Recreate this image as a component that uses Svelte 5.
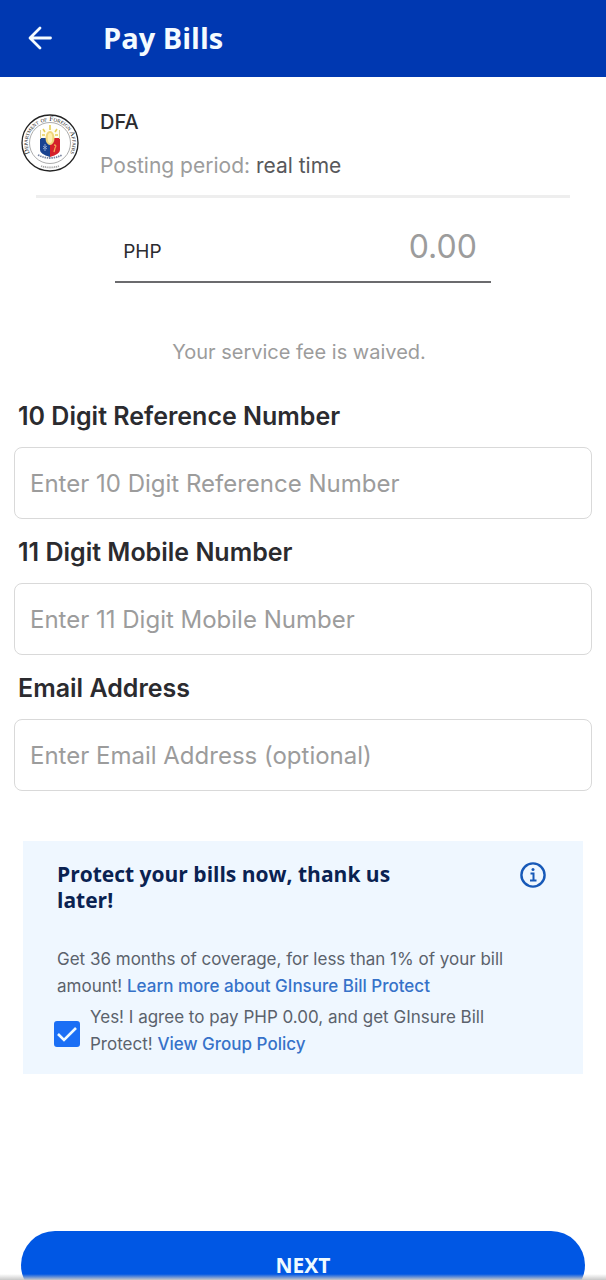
<script>
  let amount = $state('');
  let agreed = $state(true);

  const fields = [
    { id: 'reference', label: '10 Digit Reference Number', placeholder: 'Enter 10 Digit Reference Number', type: 'text' },
    { id: 'mobile', label: '11 Digit Mobile Number', placeholder: 'Enter 11 Digit Mobile Number', type: 'tel' },
    { id: 'email', label: 'Email Address', placeholder: 'Enter Email Address (optional)', type: 'email' }
  ];
</script>

<div class="screen">
  <header>
    <button class="icon-button" type="button" aria-label="Back">
      <svg width="24" height="24" viewBox="0 0 24 24" fill="none" stroke="currentColor" stroke-width="2.8" stroke-linecap="round" stroke-linejoin="round">
        <path d="M22.500 12H2.500M12 2 2 12l10 10" />
      </svg>
    </button>
    <h1>Pay Bills</h1>
  </header>

  <main>
    <section class="biller">
      <svg class="seal" width="60" height="60" viewBox="0 0 60 60" aria-hidden="true">
        <defs>
          <path id="seal-top" d="M15.500 47.500A22.400 22.400 0 1 1 44.500 47.500" />
          <clipPath id="shield"><path d="M20 17q5 1 10-3q5 4 10 3v20q0 4-10 7q-10-3-10-7z" /></clipPath>
        </defs>
        <circle cx="30" cy="30" r="28" fill="#fff" stroke="#222" stroke-width="1.3" />
        <circle cx="30" cy="30" r="20.500" fill="none" stroke="#888" stroke-width="0.7" />
        <text class="seal-text"><textPath href="#seal-top" startOffset="50%" text-anchor="middle">Department of Foreign Affairs</textPath></text>
        <path d="M21 53q9 3 18 0" fill="none" stroke="#aaa" stroke-width="1.8" stroke-dasharray="1.2 .7" />
        <g clip-path="url(#shield)">
          <path d="M20 12h20v14H20z" fill="#fffdf0" />
          <path d="M20 25h10v20H20z" fill="#194391" />
          <path d="M30 25h10v20H30z" fill="#d51f2a" />
        </g>
        <path d="M20.500 17v9M39.500 17v9" stroke="#ddd39a" />
        <ellipse cx="30" cy="25" rx="4.500" ry="7" fill="#f0d67a" />
        <ellipse cx="30" cy="25" rx="2.300" ry="5" fill="#fff0b0" />
        <path d="M30 12v5M23 16l2 3M37 16l-2 3M22 22h3M35 22h3" stroke="#e6cf55" stroke-width="1.600" />
        <path d="M25 31v7M23 33l4 3M27 33l-4 3" stroke="#8ca5cf" />
        <path d="M34 32q3 0 1 3l-1 4" fill="none" stroke="#f2a050" stroke-width="1.300" />
        <path d="M18 42q12 6 24 0" fill="none" stroke="#7783a0" stroke-width="1.800" stroke-dasharray="1.500 .8" />
      </svg>
      <div class="biller-info">
        <h2>DFA</h2>
        <p>Posting period: <span>real time</span></p>
      </div>
    </section>
    <hr />

    <div class="amount">
      <label for="amount">PHP</label>
      <input id="amount" inputmode="decimal" placeholder="0.00" bind:value={amount} />
    </div>
    <p class="fee">Your service fee is waived.</p>

    <form id="bill-form" onsubmit={(event) => event.preventDefault()}>
      {#each fields as field (field.id)}
        <div class="field">
          <label for={field.id}>{field.label}</label>
          <input id={field.id} type={field.type} placeholder={field.placeholder} />
        </div>
      {/each}
    </form>

    <section class="protect">
      <div class="protect-head">
        <h2>Protect your bills now, thank us later!</h2>
        <button class="icon-button info" type="button" aria-label="More information">
          <svg width="28" height="28" viewBox="0 0 28 28" fill="none" stroke="currentColor" stroke-width="2.400">
            <circle cx="14" cy="14" r="11.600" />
            <path d="M11.500 12.500H14.500V19M11 19.500H17.500" stroke-width="2" />
            <circle cx="14" cy="8.500" r="1.500" fill="currentColor" stroke="none" />
          </svg>
        </button>
      </div>
      <p class="copy">Get 36 months of coverage, for less than 1% of your bill amount! <a href="#learn">Learn more about GInsure Bill Protect</a></p>
      <div class="consent">
        <input id="agree" type="checkbox" bind:checked={agreed} />
        <p class="copy"><label for="agree">Yes! I agree to pay PHP 0.00, and get GInsure Bill Protect!</label> <a href="#policy">View Group Policy</a></p>
      </div>
    </section>

    <button class="next" type="submit" form="bill-form">NEXT</button>
  </main>
  <div class="edge"></div>
</div>

<style>
  :global(body) { margin: 0; background: #fff; }
  * { box-sizing: border-box; }
  h1, h2, p { margin: 0; }
  .screen {
    height: 100vh;
    overflow: hidden auto;
    scrollbar-width: none;
    font-family: Inter, "Open Sans", sans-serif;
    color: #2b2b2f;
  }
  header {
    display: flex;
    align-items: center;
    gap: 47px;
    height: 77px;
    padding: 0 24px 2px;
    background: #0038b1;
    color: #f4fbff;
  }
  h1 { font: 700 29px/36px "Open Sans", sans-serif; }
  .icon-button {
    display: grid;
    place-items: center;
    flex: none;
    width: 32px;
    height: 32px;
    padding: 0;
    border: 0;
    background: none;
    color: inherit;
  }
  main { display: flex; flex-direction: column; }
  .biller { display: flex; gap: 20px; padding: 32px 20px 0; }
  .seal { flex: none; margin-top: 4px; }
  .seal-text { font: small-caps 400 7px "Liberation Serif", serif; fill: #222; }
  .biller-info { display: flex; flex-direction: column; gap: 18px; }
  .biller h2 { font-size: 20px; line-height: 26px; font-weight: 500; }
  .biller p { font-size: 21px; line-height: 26px; color: #9c9c9c; }
  .biller span { color: #58585b; }
  hr { width: calc(100% - 72px); height: 3px; margin: 16px auto 0; border: 0; background: #eee; }
  .amount {
    display: flex;
    align-items: center;
    align-self: center;
    width: 62%;
    height: 72px;
    margin-top: 13px;
    padding: 2px 14px 0 8px;
    border-bottom: 2px solid #6b6b6e;
  }
  .amount label { font-size: 19px; padding-top: 8px; }
  .amount input {
    flex: 1;
    min-width: 0;
    padding: 0;
    border: 0;
    outline: 0;
    background: none;
    text-align: right;
    font: 32px/40px Inter, sans-serif;
  }
  input::placeholder { color: #9c9c9c; opacity: 1; }
  .fee { margin: 56px 8px 0 0; text-align: center; font-size: 20px; line-height: 26px; color: #9c9c9c; }
  form { display: flex; flex-direction: column; gap: 16px; padding: 34px 14px 0; }
  .field { display: flex; flex-direction: column; gap: 14px; }
  .field label { padding-left: 4px; font-size: 25px; line-height: 34px; font-weight: 600; }
  .field input {
    width: 100%;
    height: 72px;
    padding: 0 15px;
    border: 1px solid #d9d9d9;
    border-radius: 8px;
    background: #fff;
    font: 24px/32px Inter, sans-serif;
  }
  .protect { margin: 50px 23px 0; padding: 20px 34px 16px; background: #eff7ff; }
  .protect-head { display: flex; justify-content: space-between; align-items: flex-start; }
  .protect h2 { max-width: 360px; font: 700 21px/26px "Open Sans", sans-serif; color: #0a2251; }
  .info { color: #1759b8; height: 28px; }
  .copy { font-size: 17px; line-height: 27px; color: #5b626c; }
  .protect-head + .copy { margin-top: 33px; }
  a { color: #3672c9; font-weight: 500; text-decoration: none; }
  .consent { display: flex; align-items: center; gap: 10px; margin: 4px 0 0 -3px; }
  .consent input {
    appearance: none;
    flex: none;
    width: 26px;
    height: 26px;
    margin: 6px 0 0;
    border: 2px solid #1b6ff5;
    border-radius: 3px;
  }
  .consent input:checked {
    background: #1b6ff5 url("data:image/svg+xml,%3Csvg xmlns='http://www.w3.org/2000/svg' viewBox='0 0 22 22' fill='none' stroke='%23effaff' stroke-width='2.600'%3E%3Cpath d='M2 11l6 6L20 5'/%3E%3C/svg%3E") center / 22px no-repeat;
  }
  .next {
    flex: none;
    height: 68px;
    margin: 157px 21px 24px;
    border: 0;
    border-radius: 34px;
    background: #0057e4;
    color: #effaff;
    font: 700 21px/28px "Open Sans", sans-serif;
  }
  .edge {
    position: fixed;
    inset: auto 0 0;
    height: 6px;
    background: linear-gradient(#c8c8c800, #c8c8c8);
    pointer-events: none;
  }
</style>
